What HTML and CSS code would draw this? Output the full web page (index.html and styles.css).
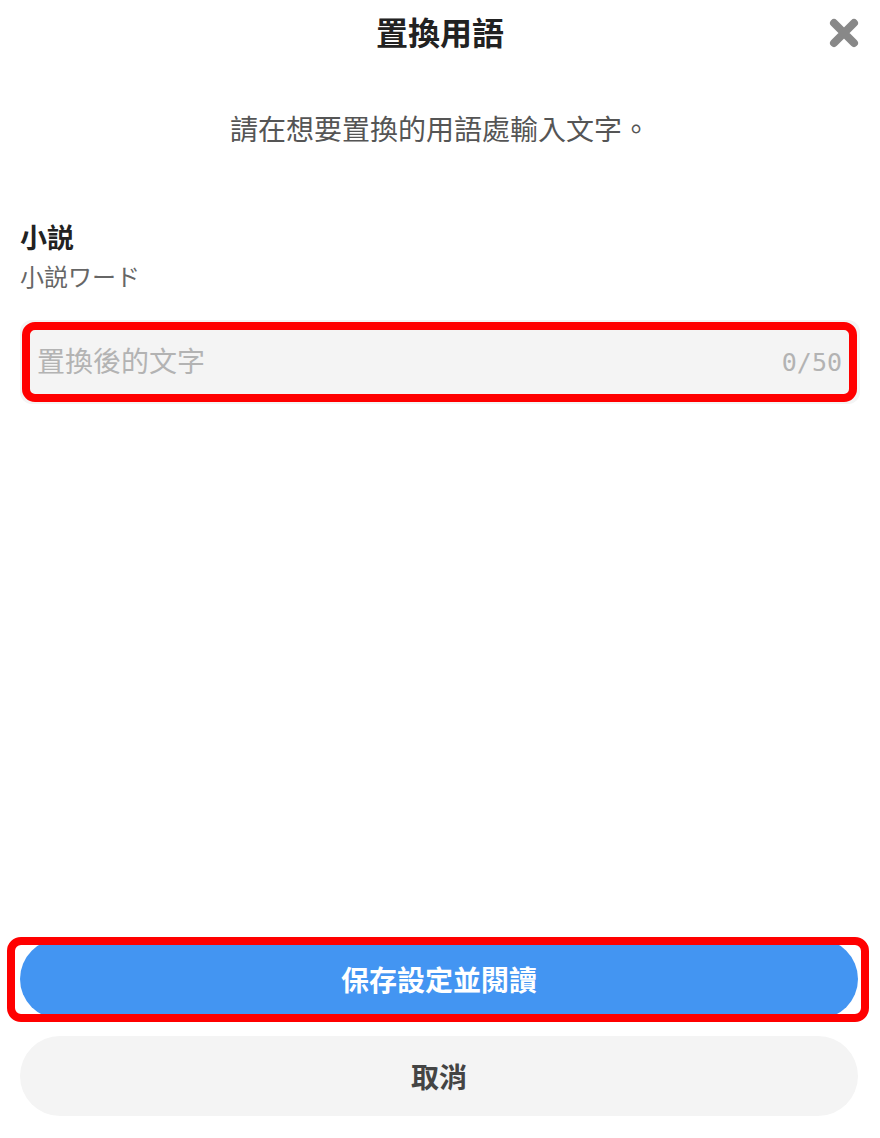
FILE: index.html
```html
<!DOCTYPE html>
<html lang="zh-Hant">
<head>
<meta charset="utf-8">
<title>置換用語</title>
<link rel="stylesheet" href="styles.css">
</head>
<body>
<div class="sheet">
  <header class="sheet-header">
    <span></span>
    <h1 class="sheet-title">置換用語</h1>
    <button class="close-btn" aria-label="關閉">
      <svg width="30" height="30" viewBox="0 0 30 30">
        <path d="M5 5 L25 25 M25 5 L5 25" stroke="#888" stroke-width="8" stroke-linecap="round" fill="none"/>
      </svg>
    </button>
  </header>

  <p class="intro">請在想要置換的用語處輸入文字。</p>

  <section class="term">
    <div class="term-name">小説</div>
    <div class="term-original">小説ワード</div>

    <div class="field">
      <span class="field-placeholder">置換後的文字</span>
      <span class="field-count">0/50</span>
      <span class="mark mark-field"></span>
    </div>
  </section>

  <footer class="actions">
    <div class="btn-wrap">
      <button class="btn btn-primary">保存設定並閱讀</button>
      <span class="mark mark-btn"></span>
    </div>
    <button class="btn btn-secondary">取消</button>
  </footer>
</div>
</body>
</html>
```

FILE: styles.css
```css
* {
  box-sizing: border-box;
}

html, body {
  margin: 0;
  padding: 0;
  background: #fff;
}

body {
  font-family: "Noto Sans CJK JP", "Noto Sans CJK TC", "Noto Sans", sans-serif;
  color: #222;
}

.sheet {
  width: 880px;
  height: 1138px;
  display: flex;
  flex-direction: column;
}

.sheet-header {
  height: 68px;
  display: grid;
  grid-template-columns: 1fr auto 1fr;
  align-items: start;
}

.sheet-title {
  margin: 0;
  font-size: 32px;
  font-weight: 700;
  line-height: 62px;
  color: #222;
}

.close-btn {
  justify-self: end;
  margin-right: 21px;
  margin-top: 18px;
  width: 30px;
  height: 30px;
  padding: 0;
  border: 0;
  background: none;
  display: flex;
}

.intro {
  margin: 42px 0 0;
  text-align: center;
  font-size: 28px;
  line-height: 36px;
  color: #555;
}

.term {
  padding: 0 20px;
  margin-top: 73px;
}

.term-name {
  font-size: 27px;
  font-weight: 700;
  line-height: 36px;
  color: #222;
}

.term-original {
  margin-top: 3px;
  font-size: 24px;
  line-height: 36px;
  color: #666;
}

.field {
  position: relative;
  margin-top: 26px;
  height: 84px;
  background: #f4f4f4;
  border-radius: 12px;
  display: flex;
  align-items: center;
  justify-content: space-between;
  padding: 0 18px 0 17px;
}

.field-placeholder {
  font-size: 28px;
  color: #b3b3b3;
  line-height: 40px;
  margin-top: -4px;
}

.field-count {
  font-family: "DejaVu Sans Mono", monospace;
  font-size: 25px;
  color: #b3b3b3;
}

/* red highlight frames drawn over the field and the primary button */
.mark {
  position: absolute;
  border: 8px solid #ff0000;
  border-radius: 13px;
  pointer-events: none;
}

.mark-field {
  left: 2px;
  right: 3px;
  top: 2px;
  bottom: 2px;
}

.actions {
  margin-top: auto;
  padding: 0 22px 22px 20px;
  display: flex;
  flex-direction: column;
  gap: 17px;
}

.btn-wrap {
  position: relative;
}

.btn {
  display: block;
  width: 100%;
  height: 80px;
  border: 0;
  border-radius: 40px;
  font-family: "Noto Sans CJK JP", "Noto Sans CJK TC", "Noto Sans", sans-serif;
  font-size: 28px;
  font-weight: 700;
  line-height: 76px;
  padding: 0;
}

.btn-primary {
  background: #4395f2;
  color: #fff;
}

.btn-secondary {
  background: #f4f4f4;
  color: #444;
}

.mark-btn {
  left: -13px;
  right: -11px;
  top: -2px;
  bottom: -3px;
  border-radius: 14px;
}
```
